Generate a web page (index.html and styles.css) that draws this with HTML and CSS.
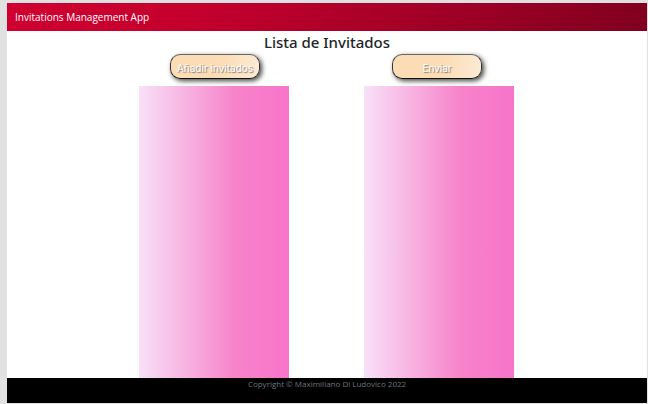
FILE: index.html
```html
<!DOCTYPE html>
<html lang="es">
<head>
<meta charset="utf-8">
<meta name="viewport" content="width=device-width, initial-scale=1">
<title>Invitations Management App</title>
<link rel="stylesheet" href="styles.css">
</head>
<body>
<div class="app">
  <header class="navbar"><a class="brand" href="#">Invitations Management App</a></header>
  <main class="content">
    <h1 class="title">Lista de Invitados</h1>
    <div class="actions">
      <button class="btn" type="button">Añadir invitados</button>
      <button class="btn" type="button">Enviar</button>
    </div>
    <div class="lists">
      <section class="list"></section>
      <section class="list"></section>
    </div>
  </main>
  <footer class="footer">Copyright © Maximiliano Di Ludovico 2022</footer>
</div>
</body>
</html>
```
FILE: styles.css
```css
* {
  box-sizing: border-box;
}

body {
  margin: 0;
  min-height: 100vh;
  display: flex;
  padding: 3px 1px 1px 7px;
  background: #e1e1e1;
  font-family: "Open Sans", "Noto Sans", sans-serif;
}

.app {
  flex: 1;
  display: flex;
  flex-direction: column;
  background: #fff;
}

.navbar {
  display: flex;
  align-items: center;
  height: 28px;
  padding: 0 8px;
  background: linear-gradient(135deg, #d00030 0%, #c4002d 30%, #80001f 100%);
}

.brand {
  color: #fff;
  font-size: 10px;
  text-decoration: none;
}

.content {
  flex: 1;
  display: flex;
  flex-direction: column;
}

.title {
  margin: 0;
  color: #212529;
  font-family: "Noto Sans", sans-serif;
  font-size: 15px;
  font-weight: 500;
  line-height: 23px;
  text-align: center;
}

.actions,
.lists {
  display: flex;
  justify-content: center;
  padding-right: 2px;
}

.actions {
  gap: 132px;
}

.btn {
  width: 90px;
  height: 25px;
  padding: 2px 0 0;
  border: 1px solid #333;
  border-top-color: #666;
  border-bottom-color: #111;
  border-radius: 10px;
  background: linear-gradient(100deg, #fbdcb4 55%, #fcebd5 100%);
  box-shadow: 2px 2px 5px #444;
  color: #fff;
  font-family: Inter, sans-serif;
  font-size: 10px;
  font-weight: 400;
  text-shadow: 1px 1px 1px #777;
  white-space: nowrap;
}

.lists {
  flex: 1;
  gap: 75px;
  padding-top: 7px;
}

.list {
  width: 150px;
  background: linear-gradient(90deg, #f8e0f8 0%, #f783ca 64%, #f774ca 100%);
}

.footer {
  height: 25px;
  background: #000;
  color: #6c757d;
  font-size: 8px;
  line-height: 12px;
  text-align: center;
}
```
